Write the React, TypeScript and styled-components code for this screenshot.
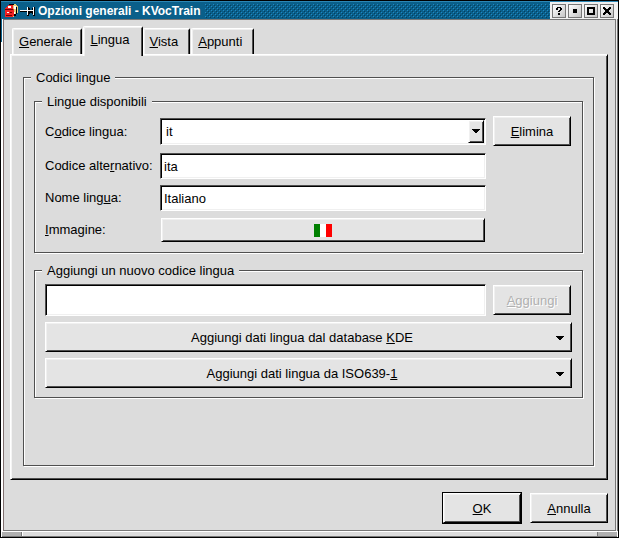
import React, { useState } from "react";
import styled, { createGlobalStyle, css } from "styled-components";

const Global = createGlobalStyle`
  *, *::before, *::after { box-sizing: border-box; }
  html, body, #root { height: 100%; }
  body { margin: 0; background: #000; color: #000; font: 13px/16px "Liberation Sans", Arial, sans-serif; overflow: hidden; }
  button, input, select { font: inherit; color: inherit; border-radius: 0; margin: 0; }
`;

const raised = css`
  background: #e4e4e4;
  border: 1px solid;
  border-color: #fff #000 #000 #fff;
  box-shadow: inset 1px 1px #f0f0f0, inset -1px -1px #505050;
`;

const Window = styled.div`
  height: 100vh;
  display: flex;
  flex-direction: column;
  background: linear-gradient(#0a5f8a 41px, #fff 41px);
  border: 1px solid #000;
`;

const TitleBar = styled.header`
  display: flex;
  height: 18px;
  background: #0a5f8a;
  border-top: 1px solid #2b87b5;
`;

const TitleIcons = styled.svg`
  width: 34px;
  height: 17px;
  flex: none;
  margin-left: 3px;
`;

const Title = styled.h1`
  margin: 0 5px 0 0;
  font-size: 12px;
  line-height: 19px;
  color: #fff;
  white-space: nowrap;
`;

const Dots = styled.svg`
  flex: 1;
  min-width: 0;
  height: 17px;
`;

const WindowButtons = styled.div`
  display: flex;
  gap: 2px;
  padding: 2px 4px 0 2px;
  background: #f0f0f0;
`;

const WindowButton = styled.button`
  width: 14px;
  height: 14px;
  padding: 0;
  display: grid;
  place-items: center;
  border: 1px solid #777;
  background: linear-gradient(135deg, #fff, #c4c4c4);
  svg { display: block; width: 10px; height: 10px; }
`;

const Frame = styled.div`
  flex: 1;
  min-height: 0;
  display: flex;
  flex-direction: column;
  margin: 0 2px;
  background: #dcdcdc;
  border: 1px solid #777;
  border-left-color: #806f6f;
  box-shadow: -1px 0 #fff, 1px 0 #eee, 2px 0 #777;
  padding: 6px 7px 7px 6px;
`;

const Tabs = styled.div`
  display: flex;
  align-items: flex-end;
  padding-left: 2px;
  height: 28px;
`;

const Tab = styled.button<{ $active?: boolean }>`
  height: 26px;
  padding: 0 11px 0 6px;
  margin-right: 1px;
  white-space: nowrap;
  background: #dcdcdc;
  border: 1px solid;
  border-color: #fff #000 transparent #fff;
  border-bottom: 0;
  border-radius: 2px 2px 0 0;
  box-shadow: inset 1px 1px #f0f0f0, inset -1px 0 #505050;
  &:first-child { padding-right: 8px; }
  ${(p) => p.$active && css`
    position: relative;
    height: 30px;
    margin-bottom: -2px;
    padding: 0 12px 3px 7px;
    margin-right: 0;
  `}
`;

const Panel = styled.main`
  flex: 1;
  border: 1px solid;
  border-color: #fff #000 #000 #fff;
  box-shadow: inset 1px 1px #f4f4f4, inset -1px -1px #505050;
  padding: 15px 12px 12px 12px;
  display: flex;
`;

const Group = styled.fieldset`
  position: relative;
  flex: 1;
  min-width: 0;
  margin: 0;
  padding: 0 11px;
  border: 0;
  &::before {
    content: "";
    position: absolute;
    inset: -9px 1px 1px 0;
    border: 1px solid #505050;
    box-shadow: 1px 1px #fff, inset 1px 1px #fff;
    pointer-events: none;
  }
`;

const Legend = styled.legend`
  position: relative;
  z-index: 1;
  margin-left: -3px;
  padding: 0 5px;
  background: #dcdcdc;
`;

const Available = styled.div`
  display: grid;
  grid-template-columns: 115px 1fr 78px;
  grid-template-rows: 31px 26px 26px 26px;
  row-gap: 6px;
  align-items: center;
  padding: 6px 0 11px;
  > button { align-self: start; }
`;

const Inner = styled(Group)`
  margin-top: 8px;
  padding-right: 13px;
  & + & { margin-top: 9px; }
`;

const Cell = styled.div`
  display: flex;
  margin-right: 7px;
`;

const sunken = css`
  background: #fff;
  border: 1px solid;
  border-color: #505050 #fff #fff #505050;
  box-shadow: inset 1px 1px #000, inset -1px -1px #f0f0f0;
`;

const Field = styled.input<{ $tall?: boolean }>`
  ${sunken}
  flex: 1;
  width: 100%;
  min-width: 0;
  height: ${(p) => (p.$tall ? 32 : 26)}px;
  padding: 1px 3px 0;
  outline: 0;
`;

const SelectBox = styled.div`
  ${sunken}
  flex: 1;
  height: 27px;
  display: grid;
  padding: 1px;
  grid-template-columns: 1fr 16px;
  select {
    grid-area: 1 / 1 / 2 / 3;
    appearance: none;
    border: 0;
    background: transparent;
    padding: 0 18px 0 4px;
    outline: 0;
  }
`;

const SelectArrow = styled.span`
  ${raised}
  grid-area: 1 / 2;
  display: grid;
  place-items: center;
  pointer-events: none;
`;

const Button = styled.button<{ $default?: boolean }>`
  ${raised}
  width: 78px;
  height: 30px;
  padding: 2px 0 0;
  &:disabled { color: #b0b0b0; text-shadow: 1px 1px #fff; }
  ${(p) => p.$default && css`outline: 1px solid #000;`}
`;

const FlagButton = styled.button`
  ${raised}
  flex: 1;
  height: 24px;
  margin: 0 1px;
  padding: 0;
  display: grid;
  place-items: center;
`;

const MenuButton = styled.button`
  ${raised}
  width: 100%;
  height: 30px;
  display: flex;
  align-items: center;
  padding: 2px 7px 0 0;
  span { flex: 1; padding-left: 2px; }
`;

const AddArea = styled.div`
  display: flex;
  flex-direction: column;
  gap: 6px;
  padding: 5px 0 11px;
  margin-right: -1px;
`;

const AddRow = styled.div`
  display: flex;
  align-items: center;
  gap: 7px;
  padding-right: 1px;
`;

const Actions = styled.footer`
  display: flex;
  justify-content: flex-end;
  gap: 9px;
  padding-top: 13px;
`;

const ResizeBar = styled.div`
  display: grid;
  grid-template-columns: 19px 1fr 19px;
  height: 6px;
  margin: 0 1px;
  border-top: 1px solid #fff;
  border-bottom: 1px solid #777;
  background: #b0b0b0;
  div { background: #dcdcdc; border: solid #777; border-width: 0 1px; box-shadow: inset 1px 0 #fff; }
`;

const Arrow = () => (
  <svg width="8" height="5" shapeRendering="crispEdges" aria-hidden="true">
    <path d="M0 0h8v1H0zM1 1h6v1H1zM2 2h4v1H2zM3 3h2v1H3z" />
  </svg>
);

const tabs = [["G", "enerale"], ["L", "ingua"], ["V", "ista"], ["A", "ppunti"]];

export default function App() {
  const [tab, setTab] = useState(1);
  return (
    <>
      <Global />
      <Window>
        <TitleBar>
          <TitleIcons viewBox="0 0 34 17" shapeRendering="crispEdges" aria-hidden="true">
            <path fill="#e8cf78" d="M5 2h6l3 2v6l-4 5H7z" />
            <path fill="#000" d="M5 2h5v1H5zM12 5h1v7h-1zM10 12h2v2h-2z" />
            <path fill="#fff" d="M10 4h2v3h-2zM10 10h1v2h-1z" />
            <path fill="#e22" d="M1 6l3-3h5v4l1 1v6l-2 1H1z" />
            <path fill="#fff" d="M4 4h3v2H4zM3 10h2v1H3z" />
            <path fill="#700" d="M1 7h8v1H1zM6 10h2v1H6zM2 13h6v1H2z" />
            <path fill="#000" d="M16 9h7v1h-7zM23 5h2v1h1v2h2V6h1V5h2v9h-2v-2h-1v-1h-2v1h-1v2h-2z" />
            <path fill="#fff" d="M16 8h7v1h-7zM23 5h1v8h-1zM24 8h5v1h-5zM29 5h1v8h-1z" />
          </TitleIcons>
          <Title>Opzioni generali - KVocTrain</Title>
          <Dots aria-hidden="true">
            <defs>
              <pattern id="dots" width="4" height="4" patternUnits="userSpaceOnUse">
                <path fill="#2089c4" d="M0 2h1v1H0zM2 0h1v1H2z" />
                <path fill="#06405f" d="M1 3h1v1H1zM3 1h1v1H3z" />
              </pattern>
            </defs>
            <rect width="100%" height="14" y="2" fill="url(#dots)" shapeRendering="crispEdges" />
          </Dots>
          <WindowButtons>
            <WindowButton aria-label="Aiuto">
              <svg shapeRendering="crispEdges"><path d="M3 1h4v1H3zM2 2h2v2H2zM6 2h2v2H6zM5 4h2v1H5zM4 5h2v1H4zM4 7h2v2H4z" /></svg>
            </WindowButton>
            <WindowButton aria-label="Riduci">
              <svg shapeRendering="crispEdges"><path d="M3 3h4v4H3z" /></svg>
            </WindowButton>
            <WindowButton aria-label="Ingrandisci">
              <svg shapeRendering="crispEdges"><path fillRule="evenodd" d="M1 1h8v8H1zM3 3v4h4V3z" /></svg>
            </WindowButton>
            <WindowButton aria-label="Chiudi">
              <svg shapeRendering="crispEdges"><path d="M1 1h2v1h1v1h2V2h1V1h2v2H8v1H7v2h1v1h1v2H7V8H6V7H4v1H3v1H1V7h1V6h1V4H2V3H1z" /></svg>
            </WindowButton>
          </WindowButtons>
        </TitleBar>
        <Frame>
          <Tabs role="tablist">
            {tabs.map(([key, rest], i) => (
              <Tab key={key} role="tab" aria-selected={tab === i} $active={tab === i} onClick={() => setTab(i)}>
                <u>{key}</u>{rest}
              </Tab>
            ))}
          </Tabs>
          <Panel>
            <Group>
              <Legend>Codici lingue</Legend>
              <Inner>
                <Legend>Lingue disponibili</Legend>
                <Available>
                  <label htmlFor="code">C<u>o</u>dice lingua:</label>
                  <Cell>
                    <SelectBox>
                      <select id="code" defaultValue="it"><option>it</option></select>
                      <SelectArrow><Arrow /></SelectArrow>
                    </SelectBox>
                  </Cell>
                  <Button><u>E</u>limina</Button>
                  <label htmlFor="alt">Codice alte<u>r</u>nativo:</label>
                  <Cell><Field id="alt" defaultValue="ita" /></Cell>
                  <i />
                  <label htmlFor="name">Nome ling<u>u</u>a:</label>
                  <Cell><Field id="name" defaultValue="Italiano" /></Cell>
                  <i />
                  <label htmlFor="image"><u>I</u>mmagine:</label>
                  <Cell>
                    <FlagButton id="image">
                      <svg width="18" height="13" shapeRendering="crispEdges" aria-hidden="true">
                        <path fill="#008000" d="M0 0h6v13H0z" />
                        <path fill="#fff" d="M6 0h6v13H6z" />
                        <path fill="#f00" d="M12 0h6v13h-6z" />
                      </svg>
                    </FlagButton>
                  </Cell>
                </Available>
              </Inner>
              <Inner>
                <Legend>Aggiungi un nuovo codice lingua</Legend>
                <AddArea>
                  <AddRow>
                    <Field $tall aria-label="Aggiungi un nuovo codice lingua" />
                    <Button disabled><u>A</u>ggiungi</Button>
                  </AddRow>
                  <MenuButton><span>Aggiungi dati lingua dal database <u>K</u>DE</span><Arrow /></MenuButton>
                  <MenuButton><span>Aggiungi dati lingua da ISO639-<u>1</u></span><Arrow /></MenuButton>
                </AddArea>
              </Inner>
            </Group>
          </Panel>
          <Actions>
            <Button $default><u>O</u>K</Button>
            <Button><u>A</u>nnulla</Button>
          </Actions>
        </Frame>
        <ResizeBar><i /><div /><i /></ResizeBar>
      </Window>
    </>
  );
}
